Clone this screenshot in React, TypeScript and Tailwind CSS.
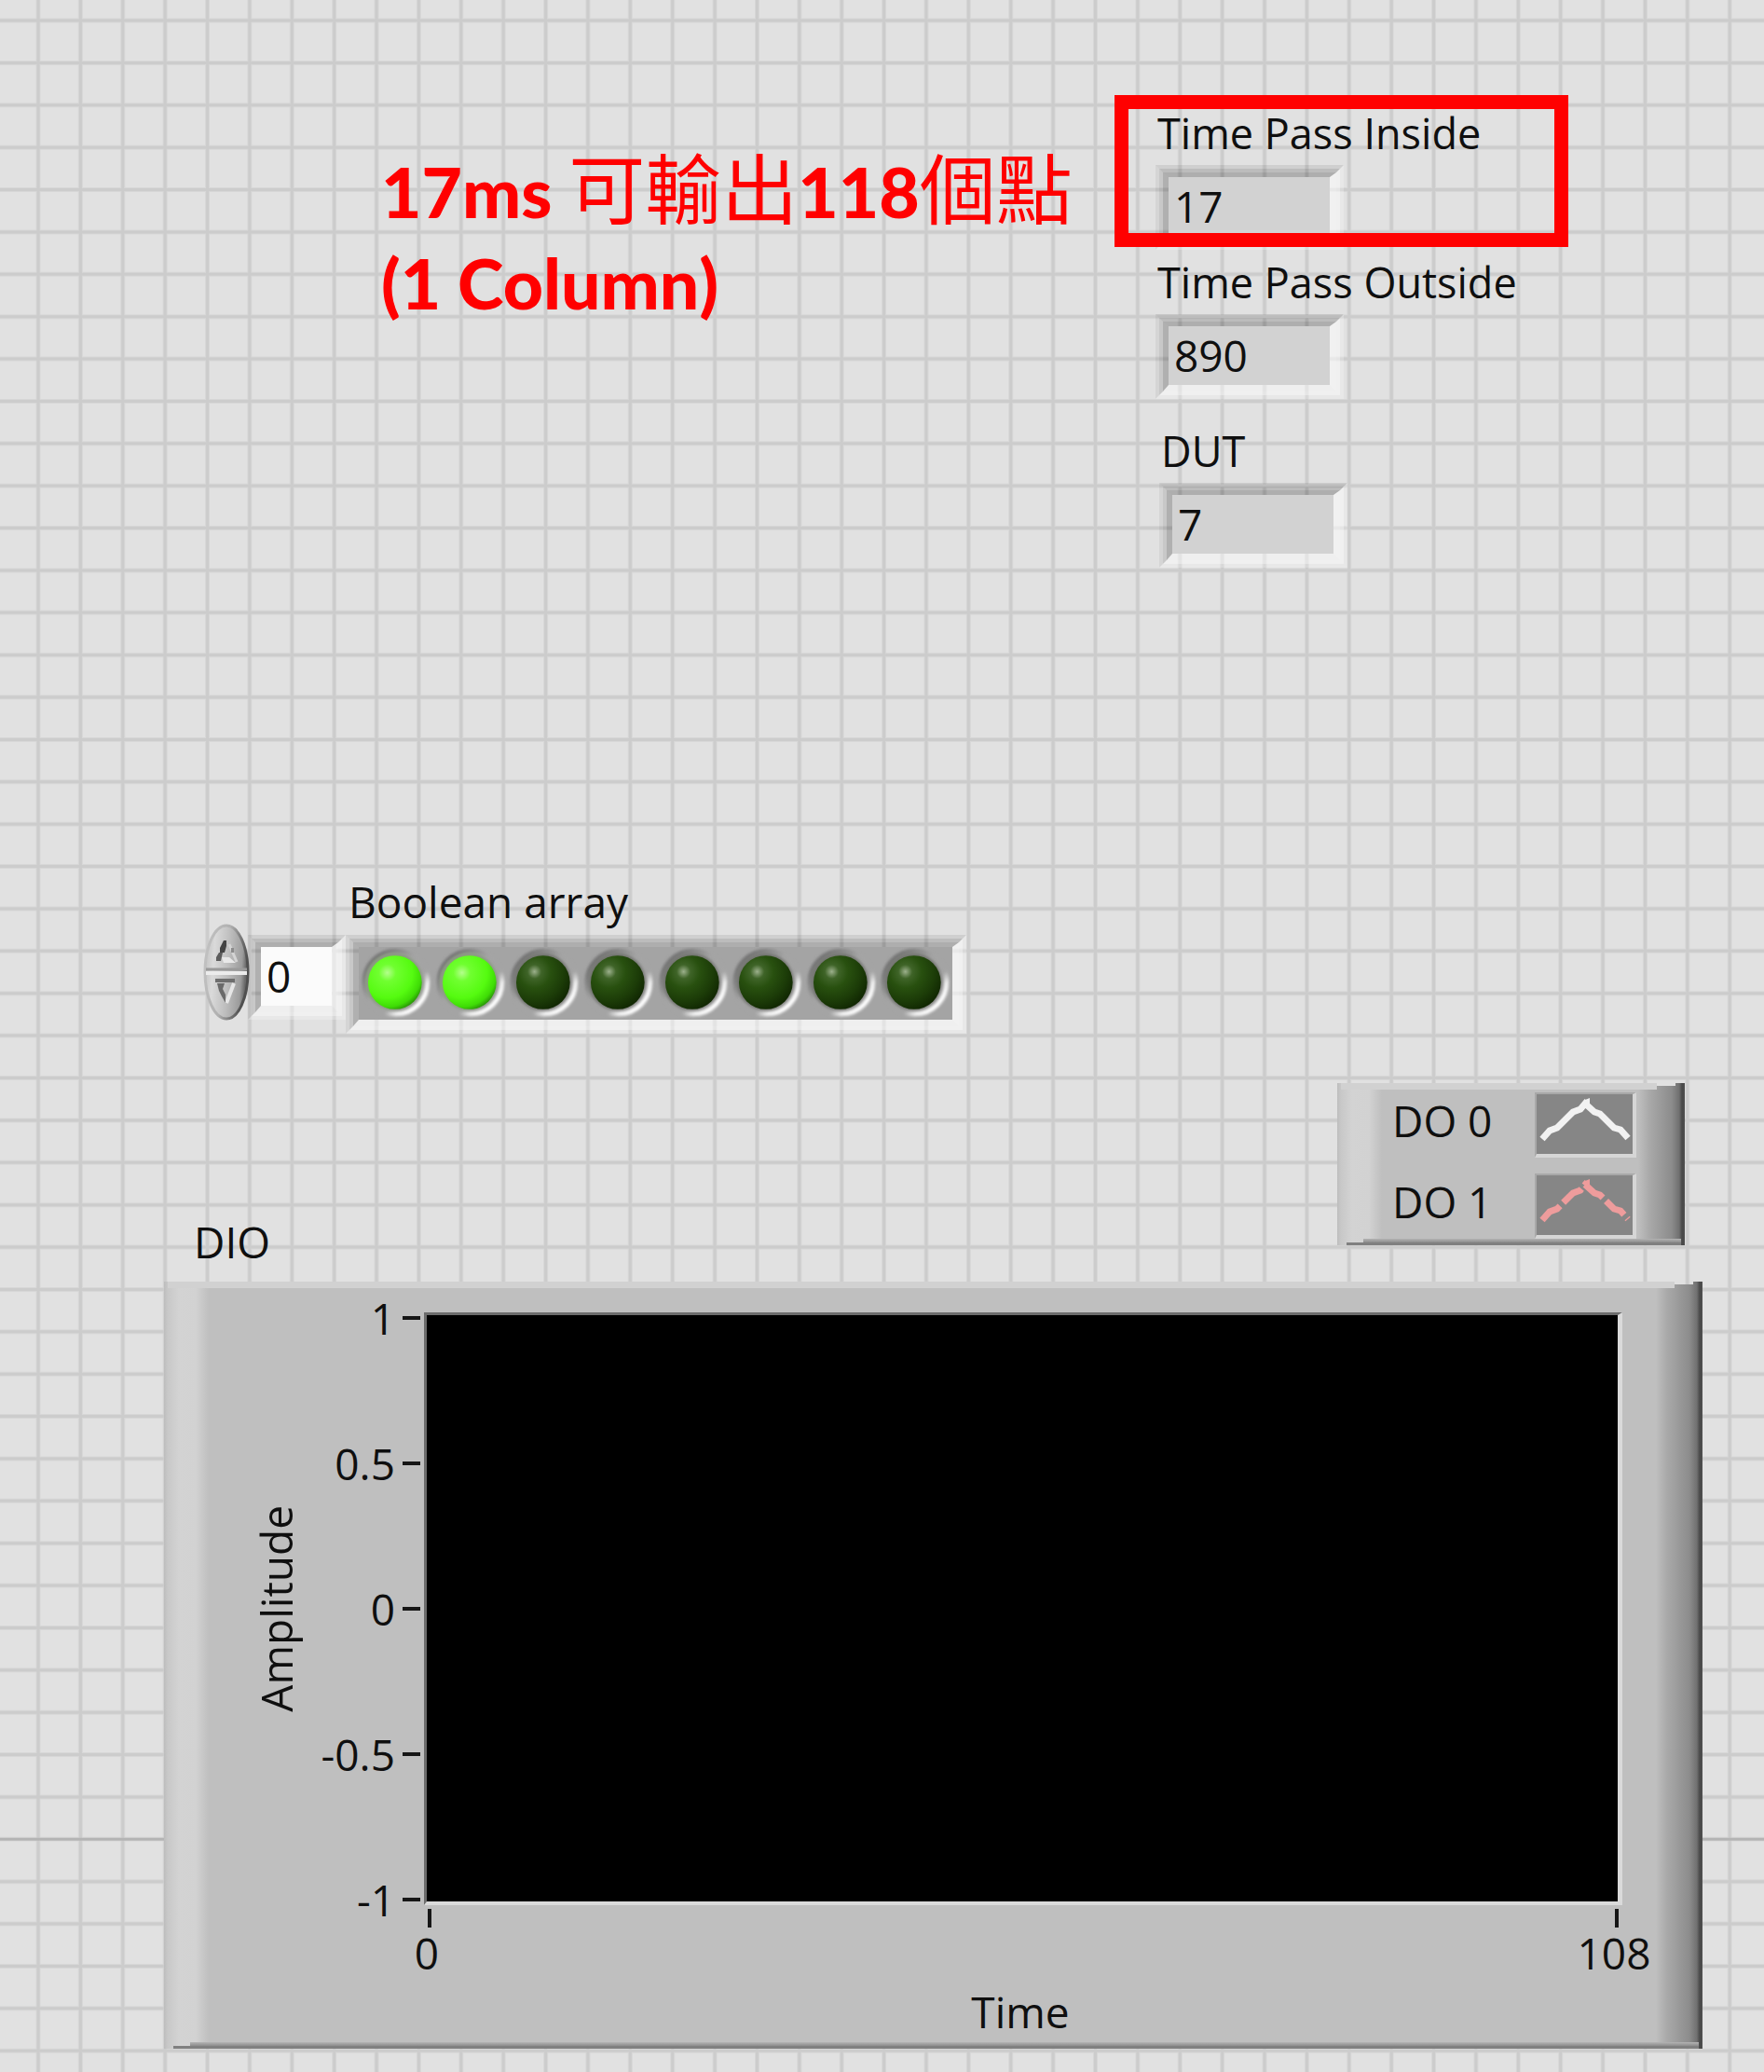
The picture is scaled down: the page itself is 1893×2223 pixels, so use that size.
import { useState, type ReactNode } from "react";

const PITCH = 45.38;
const columns = Array.from({ length: 90 }, (_, i) => 41 + i * PITCH);
const rows = Array.from({ length: 90 }, (_, i) => 22 + i * PITCH);
const ORIGIN_ROW = 43;

function AlignmentGrid() {
  return (
    <svg className="absolute inset-0 -z-10 h-full w-full" aria-hidden="true">
      <g stroke="#d7d7d7" strokeWidth="5">
        {columns.map((x) => (
          <line key={x} x1={x} x2={x} y1="0" y2="100%" />
        ))}
        {rows.map((y) => (
          <line key={y} x1="0" x2="100%" y1={y} y2={y} />
        ))}
      </g>
      <g strokeWidth="3">
        {columns.map((x) => (
          <line key={x} x1={x} x2={x} y1="0" y2="100%" stroke="#cccccc" />
        ))}
        {rows.map((y, i) => (
          <line key={y} x1="0" x2="100%" y1={y} y2={y} stroke={i === ORIGIN_ROW ? "#b4b4b4" : "#cccccc"} />
        ))}
      </g>
    </svg>
  );
}

/* Sunken translucent frame: shadow on top and left, highlight on right and bottom. */
function Sunken({ children, className = "" }: { children: ReactNode; className?: string }) {
  return (
    <div
      className={
        "border-t-4 border-r-4 border-b-4 border-l-4 border-t-black/8 border-r-white/25 border-b-white/25 border-l-black/5 " +
        className
      }
    >
      <div className="border-t-4 border-r-4 border-b-4 border-l-4 border-t-black/16 border-r-white/50 border-b-white/50 border-l-black/11">
        <div className="border-t-5 border-r-7 border-b-7 border-l-6 border-t-black/23 border-r-white/55 border-b-white/45 border-l-black/22">
          {children}
        </div>
      </div>
    </div>
  );
}

function Indicator({ id, label, value }: { id: string; label: string; value: string }) {
  return (
    <div>
      <label htmlFor={id} className="block h-16 pl-0.5 text-[45px] leading-[68px] whitespace-nowrap">
        {label}
      </label>
      <Sunken className="mt-1 w-[202px]">
        <input
          id={id}
          readOnly
          value={value}
          className="block h-[63px] w-full bg-[#d2d2d2] pl-1.5 leading-[63px] outline-none"
        />
      </Sunken>
    </div>
  );
}

function Led({ on, index }: { on: boolean; index: number }) {
  return (
    <svg viewBox="0 0 80 78" className="h-[78px] w-full" role="img" aria-label={`Element ${index} ${on ? "on" : "off"}`}>
      <defs>
        <radialGradient id="led-on" cx="0.36" cy="0.32" r="0.72">
          <stop offset="0" stopColor="#b4ff8c" />
          <stop offset="0.22" stopColor="#70ff30" />
          <stop offset="0.65" stopColor="#55fb10" />
          <stop offset="0.88" stopColor="#3fdc06" />
          <stop offset="1" stopColor="#2b9a08" />
        </radialGradient>
        <radialGradient id="led-off" cx="0.34" cy="0.3" r="0.76">
          <stop offset="0" stopColor="#9cb08c" />
          <stop offset="0.17" stopColor="#3f6428" />
          <stop offset="0.4" stopColor="#28500f" />
          <stop offset="0.72" stopColor="#1c3c08" />
          <stop offset="1" stopColor="#102602" />
        </radialGradient>
        <linearGradient id="led-rim" x1="0.15" y1="0.15" x2="0.85" y2="0.85">
          <stop offset="0" stopColor="#747474" />
          <stop offset="0.4" stopColor="#a4a4a4" />
          <stop offset="0.72" stopColor="#a4a4a4" />
          <stop offset="0.86" stopColor="#f0f0f0" />
          <stop offset="1" stopColor="#ffffff" />
        </linearGradient>
        <filter id="led-soft" x="-20%" y="-20%" width="140%" height="140%">
          <feGaussianBlur stdDeviation="1.5" />
        </filter>
      </defs>
      <circle cx="40" cy="38" r="34" fill="none" stroke="url(#led-rim)" strokeWidth="5" filter="url(#led-soft)" />
      <circle cx="38" cy="37" r="31" fill={on ? "#8a9a80" : "#737571"} filter="url(#led-soft)" />
      <circle cx="39" cy="38" r="29" fill={on ? "url(#led-on)" : "url(#led-off)"} />
    </svg>
  );
}

function IncrementDial({ onStep }: { onStep: (delta: number) => void }) {
  return (
    <div className="relative -mt-3 h-[104px] w-12 shrink-0">
      <svg viewBox="0 0 50 104" className="absolute inset-0 h-full w-[50px]" aria-hidden="true">
        <defs>
          <linearGradient id="dial" x1="0" x2="1" y1="0" y2="0.15">
            <stop offset="0" stopColor="#bcbcbc" />
            <stop offset="0.25" stopColor="#dadada" />
            <stop offset="0.6" stopColor="#bdbdbd" />
            <stop offset="0.9" stopColor="#9c9c9c" />
            <stop offset="1" stopColor="#6a6a6a" />
          </linearGradient>
          <linearGradient id="dial-edge" x1="0" x2="1" y1="0" y2="0.3">
            <stop offset="0" stopColor="#c4c4c4" />
            <stop offset="0.55" stopColor="#b0b0b0" />
            <stop offset="1" stopColor="#505050" />
          </linearGradient>
        </defs>
        <ellipse cx="25" cy="52" rx="23" ry="50" fill="url(#dial)" stroke="url(#dial-edge)" strokeWidth="3" />
        <path d="M3 49H47" stroke="#9a9a9a" strokeWidth="3" />
        <path d="M3 53H47" stroke="#ececec" strokeWidth="4" />
      </svg>
      <button aria-label="Increment index" onClick={() => onStep(1)} className="relative block h-[52px] w-[50px]">
        <svg viewBox="0 0 50 52" className="h-full w-full" aria-hidden="true">
          <path d="M20 36H28L35 42H22Z" fill="#e8e8e8" />
          <path d="M28 22L36 41" stroke="#d4d4d4" strokeWidth="3" />
          <path d="M22 18H25V24L23 31H18V26Z" fill="#444444" />
          <path d="M17 31H21L19 40H14V36Z" fill="#5c5c5c" />
          <path d="M30 26H33V31H30Z" fill="#8c8c8c" />
        </svg>
      </button>
      <button aria-label="Decrement index" onClick={() => onStep(-1)} className="relative block h-[52px] w-[50px]">
        <svg viewBox="0 0 50 52" className="h-full w-full" aria-hidden="true">
          <path d="M33 12L25 33" stroke="#e6e6e6" strokeWidth="4" />
          <path d="M13 9H34" stroke="#6e6e6e" strokeWidth="4" />
          <path d="M15 12H23L21 18L24 24V33L20 26L17 20Z" fill="#6a6a6a" />
        </svg>
      </button>
    </div>
  );
}

function BooleanArray() {
  const [index, setIndex] = useState(0);
  const elements = [true, true, false, false, false, false, false, false];
  return (
    <section className="mt-[326px]">
      <label htmlFor="array-index" className="block h-16 pl-[374px] leading-16">
        Boolean array
      </label>
      <div className="mt-1 flex items-start pl-[218px]">
        <IncrementDial onStep={(d) => setIndex((v) => Math.max(0, v + d))} />
        <Sunken className="w-[105px] shrink-0">
          <input
            id="array-index"
            readOnly
            value={index}
            className="block h-[63px] w-full bg-[#fbfbfb] pl-1.5 leading-[63px] outline-none"
          />
        </Sunken>
        <Sunken className="w-[666px]">
          <div className="grid grid-cols-8 bg-[#a4a4a4]">
            {elements.map((on, i) => (
              <Led key={i} on={on} index={i} />
            ))}
          </div>
        </Sunken>
      </div>
    </section>
  );
}

/* Raised plate with a wide light bevel on the left and a dark one on the right. */
function RaisedPanel({ children, className = "" }: { children: ReactNode; className?: string }) {
  return (
    <div
      className={
        "relative bg-[linear-gradient(90deg,#bdbdbd_0,#c8c8c8_4px,#d3d3d3_16px,#d2d2d2_34px,#bfbfbf_48px,#bfbfbf_calc(100%-50px),#a9a9a9_calc(100%-38px),#8c8c8c_calc(100%-14px),#707070_calc(100%-6px),#484848_calc(100%-3px),#505050_100%)] [clip-path:polygon(0_0,calc(100%-30px)_0,calc(100%-30px)_3px,calc(100%-10px)_3px,calc(100%-10px)_0,100%_0,100%_100%,0_100%)] " +
        className
      }
    >
      <div className="absolute top-0 right-[30px] left-1 h-[7px] bg-[#d1d1d1]" />
      <div className="absolute right-1 bottom-0 left-[10px] h-[3px] bg-[#808080]" />
      <div className="absolute right-1 bottom-[3px] left-7 h-1 bg-linear-to-b from-[#b4b4b4] to-[#8c8c8c]" />
      <div className="relative">{children}</div>
    </div>
  );
}

function LegendEntry({ label, color, dash }: { label: string; color: string; dash?: string }) {
  return (
    <div className="flex h-[87px] items-start justify-between">
      <span className="h-16 leading-16">{label}</span>
      <button
        aria-label={`${label} plot style`}
        className="mt-0.5 border-t-2 border-r-4 border-b-4 border-l-2 border-t-[#a8a8a8] border-r-[#d6d6d6] border-b-[#d6d6d6] border-l-[#a8a8a8] bg-[#868686]"
      >
        <svg viewBox="0 0 103 64" className="h-16 w-[103px]" aria-hidden="true">
          <path
            d="M6 48L14 39L22 36L39 19L47 16L52 10L62 19L68 21L83 36L90 38L98 47"
            fill="none"
            stroke={color}
            strokeWidth="7"
            strokeDasharray={dash}
          />
          <path d="M52 6L57 4V12" fill={color} />
        </svg>
      </button>
    </div>
  );
}

function Legend() {
  return (
    <RaisedPanel className="h-[174px] w-[373px]">
      <div className="pt-2 pr-[52px] pl-[59px]">
        <LegendEntry label="DO 0" color="#f2f2f2" />
        <LegendEntry label="DO 1" color="#ee9c9c" dash="25 5" />
      </div>
    </RaisedPanel>
  );
}

function Graph() {
  return (
    <RaisedPanel className="mt-[11px] mr-[66px] ml-[176px] h-[823px]">
      <div className="flex items-start pt-[7px]">
        <div className="ml-[88px] flex h-[688px] w-16 items-center justify-center">
          <span className="rotate-180 leading-16 [writing-mode:vertical-rl]">Amplitude</span>
        </div>
        <ul className="flex h-[688px] w-[123px] shrink-0 flex-col justify-between">
          {["1", "0.5", "0", "-0.5", "-1"].map((t) => (
            <li key={t} className="flex h-16 items-center justify-end gap-2 leading-16">
              {t}
              <span className="h-1 w-[19px] bg-[#161616]" />
            </li>
          ))}
        </ul>
        <div className="mt-[26px] mr-[86px] ml-1 min-w-0 flex-1">
          <div className="h-[636px] border-t-3 border-r-5 border-b-4 border-l-3 border-t-[#6c6c6c] border-r-[#dadada] border-b-[#dadada] border-l-[#6c6c6c] bg-black" />
          <div className="-mr-[34px] -ml-[34px] flex justify-between">
            {["0", "108"].map((t) => (
              <div key={t} className="flex w-20 flex-col items-center">
                <span className="mt-1 h-5 w-1 bg-[#161616]" />
                <span className="pr-1.5 leading-[54px]">{t}</span>
              </div>
            ))}
          </div>
          <p className="mt-1 pr-1.5 text-center leading-16">Time</p>
        </div>
      </div>
    </RaisedPanel>
  );
}

export default function App() {
  return (
    <main className="relative isolate min-h-screen overflow-hidden bg-[#e1e1e1] pt-[102px] font-['Open_Sans',sans-serif] text-[46px] text-[#0f0f0f]">
      <AlignmentGrid />
      <section className="flex items-start pl-[409px]">
        <p className="mt-[54px] w-[831px] shrink-0 font-[Lato,'Noto_Sans_CJK_TC',sans-serif] text-[75px] leading-[98px] font-black whitespace-nowrap text-[#ff0000]">
          17ms <span className="font-['Noto_Sans_CJK_TC',sans-serif] text-[82px] leading-none font-normal">可輸出</span>118
          <span className="font-['Noto_Sans_CJK_TC',sans-serif] text-[82px] leading-none font-normal">個點</span>
          <br />
          (1 Column)
        </p>
        <div className="pt-[7px]">
          <div className="relative">
            <Indicator id="time-inside" label="Time Pass Inside" value="17" />
            <div className="pointer-events-none absolute -top-[7px] -left-[44px] h-[163px] w-[487px] border-15 border-[#ff0000]" />
          </div>
          <div className="mt-px">
            <Indicator id="time-outside" label="Time Pass Outside" value="890" />
          </div>
          <div className="mt-[22px] pl-1">
            <Indicator id="dut" label="DUT" value="7" />
          </div>
        </div>
      </section>
      <BooleanArray />
      <section>
        <div className="mt-[53px] flex items-start justify-between pr-[85px] pl-[208px]">
          <h2 className="mt-[138px] leading-16">DIO</h2>
          <Legend />
        </div>
        <Graph />
      </section>
    </main>
  );
}
